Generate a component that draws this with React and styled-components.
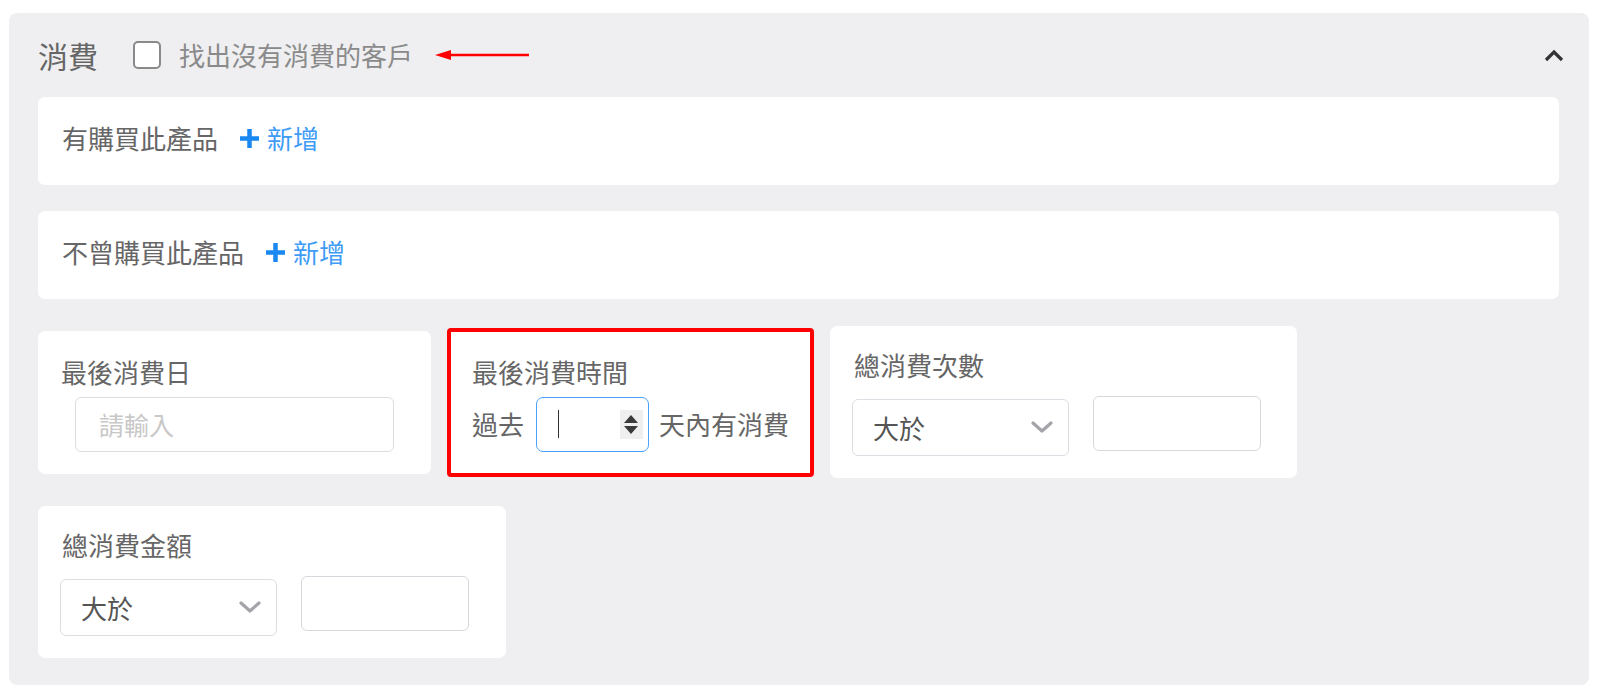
import styled, { createGlobalStyle } from 'styled-components'

const GlobalStyle = createGlobalStyle`
  body {
    margin: 0;
    background: #ffffff;
    font-family: "Noto Sans CJK TC", "Noto Sans", sans-serif;
  }
`

const Panel = styled.section`
  width: 1580px;
  box-sizing: border-box;
  margin: 13px 0 0 9px;
  padding: 0 30px 27px 29px;
  background: #efeff1;
  border-radius: 8px;
`

const Header = styled.div`
  height: 84px;
  display: flex;
  align-items: center;
`

const HeaderTitle = styled.span`
  font-size: 30px;
  line-height: 36px;
  color: #666666;
`

const CheckBox = styled.span`
  width: 28px;
  height: 28px;
  box-sizing: border-box;
  margin-left: 35px;
  border: 2px solid #8a8a8a;
  border-radius: 5px;
  background: #ffffff;
`

const CheckLabel = styled.span`
  margin-left: 18px;
  font-size: 26px;
  line-height: 30px;
  color: #8a8a8a;
`

const Arrow = styled.svg`
  margin-left: 22px;
`

const Collapse = styled.svg`
  margin-left: auto;
  margin-right: -5px;
`

const WideCard = styled.div`
  height: 88px;
  box-sizing: border-box;
  margin-top: ${p => p.$gap || 0}px;
  padding: 0 24px 6px;
  display: flex;
  align-items: center;
  background: #ffffff;
  border-radius: 7px;
`

const Label = styled.span`
  font-size: 26px;
  line-height: 30px;
  color: #666666;
  white-space: nowrap;
`

const AddLink = styled.span`
  display: flex;
  align-items: center;
  margin-left: 20px;
  gap: 6px;
  font-size: 26px;
  line-height: 30px;
  color: #3f9cf6;
`

const Row = styled.div`
  display: flex;
  align-items: center;
  gap: 16px;
  margin-top: ${p => p.$gap || 27}px;
`

const Card = styled.div`
  width: ${p => p.$w}px;
  box-sizing: border-box;
  padding: ${p => p.$pad};
  background: #ffffff;
  border: ${p => (p.$marked ? '4px solid #ff0000' : 'none')};
  border-radius: ${p => (p.$marked ? 4 : 7)}px;
`

const CardTitle = styled.div`
  font-size: 26px;
  line-height: 30px;
  color: #666666;
  margin-bottom: ${p => p.$gap}px;
`

const TextInput = styled.div`
  height: 55px;
  width: ${p => p.$w}px;
  box-sizing: border-box;
  margin-left: ${p => p.$indent || 0}px;
  padding-left: 23px;
  display: flex;
  align-items: center;
  border: 1px solid #dcdee3;
  border-radius: 6px;
  font-size: 25px;
  color: #c8c8c8;
`

const InlineRow = styled.div`
  display: flex;
  align-items: center;
`

const NumberBox = styled.div`
  width: 115px;
  height: 55px;
  box-sizing: border-box;
  margin: 0 10px 0 12px;
  padding: 0 5px 0 21px;
  display: flex;
  align-items: center;
  justify-content: space-between;
  border: 1px solid #4aa2fb;
  border-radius: 7px;
`

const Caret = styled.span`
  width: 1px;
  height: 28px;
  background: #333333;
`

const Spinner = styled.span`
  width: 23px;
  height: 29px;
  display: flex;
  flex-direction: column;
  align-items: center;
  justify-content: center;
  gap: 3px;
  background: #efefef;
`

const Tri = styled.span`
  width: 0;
  height: 0;
  border-left: 7px solid transparent;
  border-right: 7px solid transparent;
  ${p => (p.$up ? 'border-bottom' : 'border-top')}: 8px solid #3a3a3a;
`

const CompareRow = styled.div`
  display: flex;
  align-items: flex-start;
  gap: 24px;
  margin-left: -2px;
`

const Select = styled.div`
  width: 217px;
  height: 57px;
  box-sizing: border-box;
  margin-top: 3px;
  padding: 0 15px 0 20px;
  display: flex;
  align-items: center;
  justify-content: space-between;
  border: 1px solid #dcdee3;
  border-radius: 6px;
  font-size: 26px;
  color: #555555;
`

const ValueInput = styled.div`
  width: 168px;
  height: 55px;
  box-sizing: border-box;
  border: 1px solid #d6d8dd;
  border-radius: 6px;
`

function Plus () {
  return (
    <svg width="23" height="23" viewBox="0 0 23 23">
      <path d="M11.5 2v19M2 11.5h19" stroke="#1a88f2" strokeWidth="4.5" />
    </svg>
  )
}

function DownIcon () {
  return (
    <svg width="22" height="13" viewBox="0 0 22 13">
      <polyline points="2,2 11,10 20,2" fill="none" stroke="#a4a4ab" strokeWidth="3.2" strokeLinecap="round" strokeLinejoin="round" />
    </svg>
  )
}

function Compare ({ title, w }) {
  return (
    <Card $w={w} $pad="24px 36px 22px 24px">
      <CardTitle $gap={16}>{title}</CardTitle>
      <CompareRow>
        <Select>
          <span>大於</span>
          <DownIcon />
        </Select>
        <ValueInput />
      </CompareRow>
    </Card>
  )
}

function App () {
  return (
    <>
      <GlobalStyle />
      <Panel>
        <Header>
          <HeaderTitle>消費</HeaderTitle>
          <CheckBox />
          <CheckLabel>找出沒有消費的客戶</CheckLabel>
          <Arrow width="95" height="12" viewBox="0 0 95 12">
            <line x1="12" y1="6" x2="94" y2="6" stroke="#ff0000" strokeWidth="2.5" />
            <polygon points="0,6 16,1 16,11" fill="#ff0000" />
          </Arrow>
          <Collapse width="20" height="13" viewBox="0 0 20 13">
            <polyline points="2,11 10,3 18,11" fill="none" stroke="#333333" strokeWidth="3.2" />
          </Collapse>
        </Header>

        <WideCard>
          <Label>有購買此產品</Label>
          <AddLink><Plus />新增</AddLink>
        </WideCard>
        <WideCard $gap={26}>
          <Label>不曾購買此產品</Label>
          <AddLink><Plus />新增</AddLink>
        </WideCard>

        <Row>
          <Card $w={393} $pad="26px 37px 22px 23px">
            <CardTitle $gap={10}>最後消費日</CardTitle>
            <TextInput $w={319} $indent={14}>請輸入</TextInput>
          </Card>
          <Card $w={367} $pad="25px 21px 21px 21px" $marked>
            <CardTitle $gap={10}>最後消費時間</CardTitle>
            <InlineRow>
              <Label>過去</Label>
              <NumberBox>
                <Caret />
                <Spinner>
                  <Tri $up />
                  <Tri />
                </Spinner>
              </NumberBox>
              <Label>天內有消費</Label>
            </InlineRow>
          </Card>
          <Compare title="總消費次數" w={467} />
        </Row>

        <Row $gap={28}>
          <Compare title="總消費金額" w={468} />
        </Row>
      </Panel>
    </>
  )
}

export default App
